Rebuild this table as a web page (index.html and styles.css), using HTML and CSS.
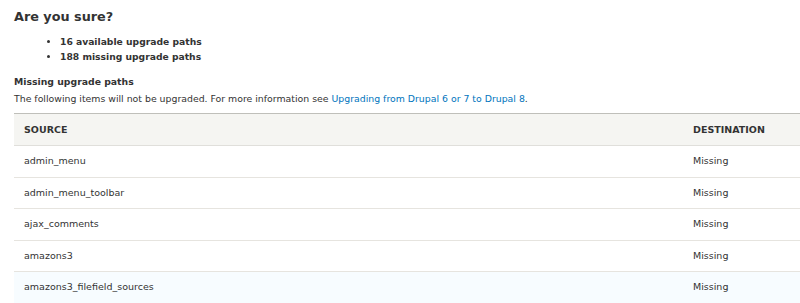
FILE: index.html
```html
<!DOCTYPE html>
<html lang="en">
<head>
    <meta charset="UTF-8">
    <title>Are you sure?</title>
    <link rel="stylesheet" href="styles.css">
</head>
<body>
    <div class="page">
        <h2 class="page-title">Are you sure?</h2>
        <ul class="summary">
            <li>16 available upgrade paths</li>
            <li>188 missing upgrade paths</li>
        </ul>
        <h3 class="section-title">Missing upgrade paths</h3>
        <p class="description">The following items will not be upgraded. For more information see <a href="#">Upgrading from Drupal 6 or 7 to Drupal 8</a>.</p>
        <table class="paths">
            <thead>
                <tr>
                    <th>Source</th>
                    <th class="dest">Destination</th>
                </tr>
            </thead>
            <tbody>
                <tr><td>admin_menu</td><td class="dest">Missing</td></tr>
                <tr><td>admin_menu_toolbar</td><td class="dest">Missing</td></tr>
                <tr><td>ajax_comments</td><td class="dest">Missing</td></tr>
                <tr><td>amazons3</td><td class="dest">Missing</td></tr>
                <tr class="hover"><td>amazons3_filefield_sources</td><td class="dest">Missing</td></tr>
            </tbody>
        </table>
    </div>
</body>
</html>
```

FILE: styles.css
```css
body {
    margin: 0;
    font-family: "DejaVu Sans", "Lucida Grande", sans-serif;
    color: #333;
    background-color: #fff;
    overflow: hidden;
}

.page {
    padding: 0 0 0 14px;
}

.page-title {
    font-size: 12.8px;
    font-weight: bold;
    margin: 0;
    padding-top: 7px;
    line-height: 20px;
}

.summary {
    margin: 7px 0 0;
    padding-left: 46px;
    font-size: 9.2px;
    font-weight: bold;
    line-height: 15px;
}

.section-title {
    font-size: 9.3px;
    font-weight: bold;
    margin: 10px 0 0;
    line-height: 16px;
}

.description {
    font-size: 9.35px;
    margin: 2px 0 0;
    line-height: 14px;
}

.description a {
    color: #0074bd;
    text-decoration: none;
}

.paths {
    width: 786px;
    border-collapse: collapse;
    margin-top: 7px;
    font-size: 9.5px;
    border-top: 1px solid #bfbfba;
}

.paths th {
    text-align: left;
    text-transform: uppercase;
    background-color: #f5f5f2;
    padding: 9px 10px;
    border-bottom: 1px solid #e0dfdb;
    line-height: 13px;
}

.paths td {
    padding: 9px 10px;
    border-bottom: 1px solid #e6e4df;
    line-height: 12.5px;
}

.paths .dest {
    width: 97px;
}

.paths tr.hover td {
    background-color: #f7fcff;
}
```
